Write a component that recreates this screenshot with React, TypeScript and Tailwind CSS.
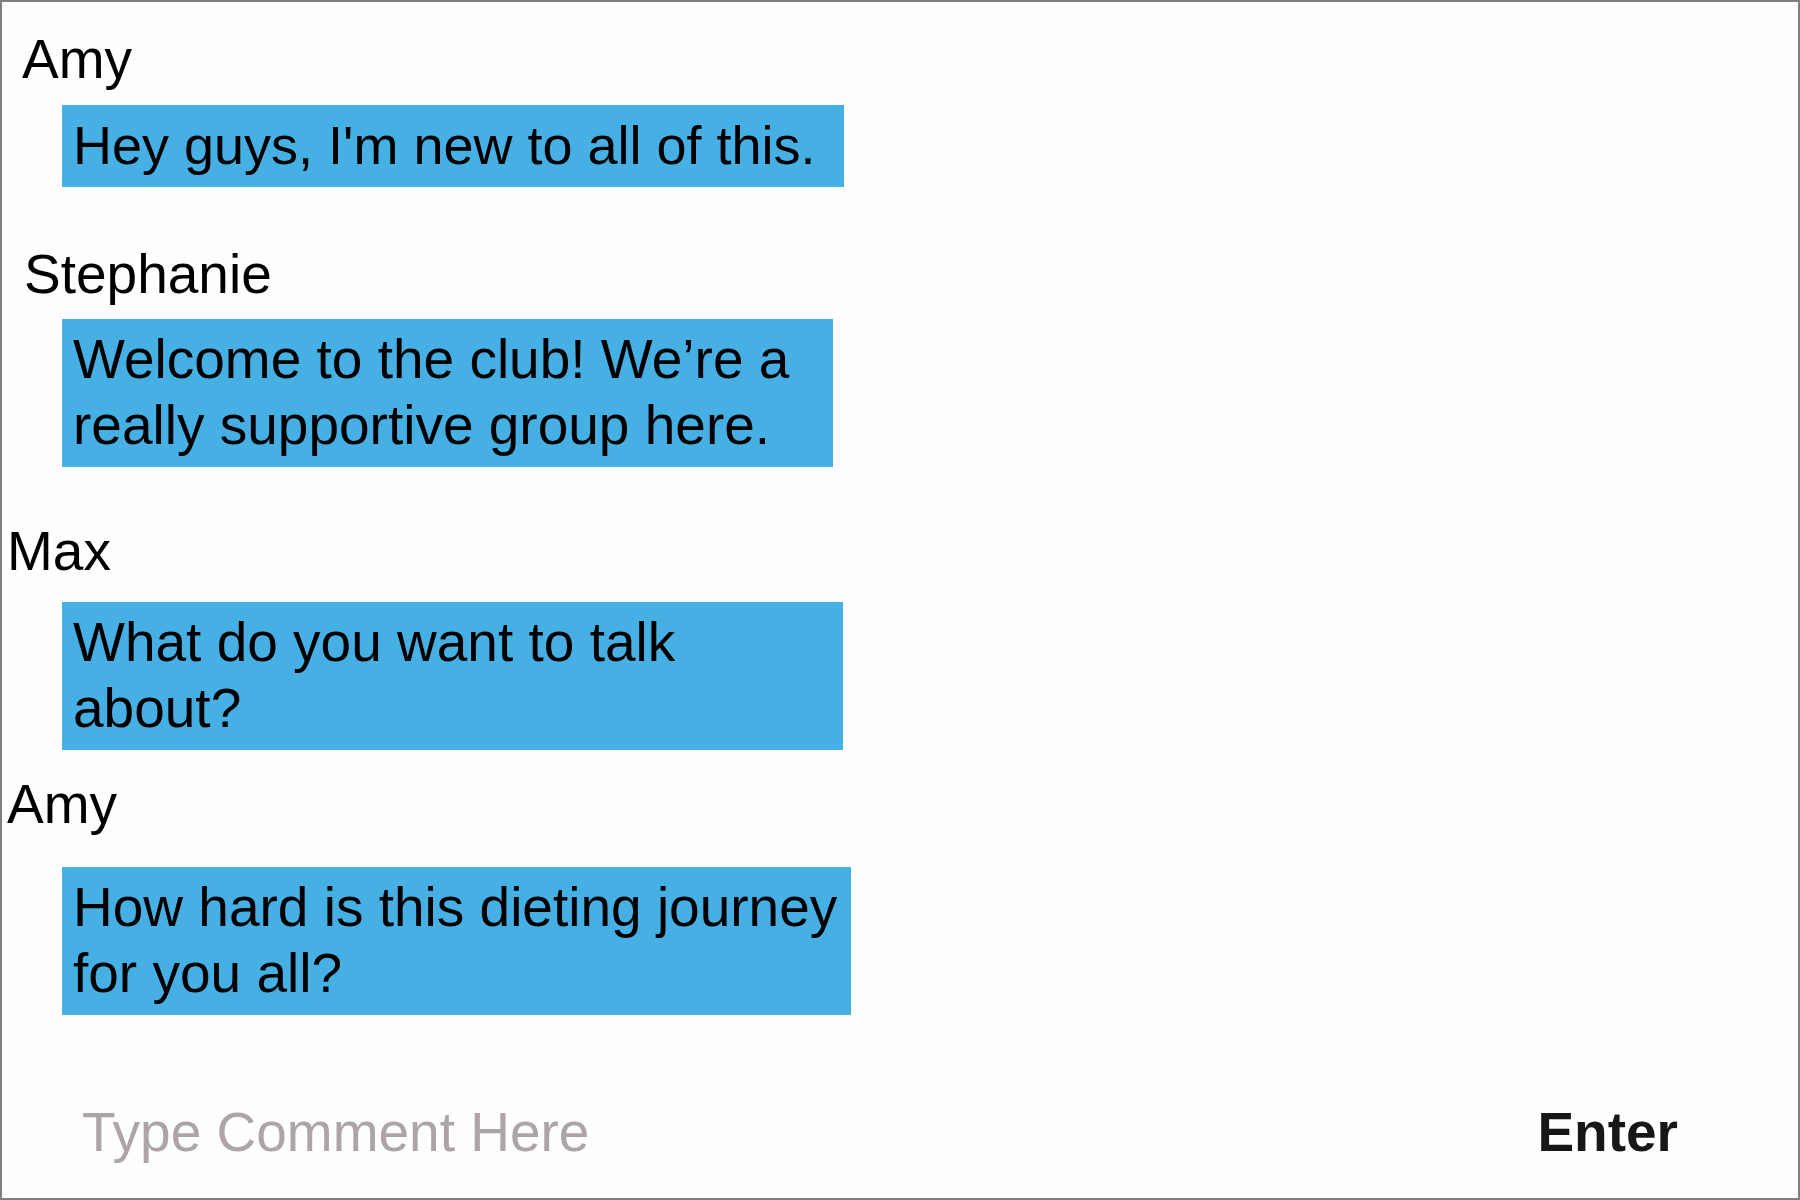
const messages = [
  {
    name: "Amy",
    nameClass: "mt-[24px] ml-[20px]",
    bubbleClass: "mt-[13px] w-[782px] text-[54px]",
    lines: ["Hey guys, I'm new to all of this."],
  },
  {
    name: "Stephanie",
    nameClass: "mt-[54px] ml-[22px]",
    bubbleClass: "mt-[12px] w-[771px]",
    lines: ["Welcome to the club! We’re a", "really supportive group here."],
  },
  {
    name: "Max",
    nameClass: "mt-[51px] ml-[5px]",
    bubbleClass: "mt-[18px] w-[781px]",
    lines: ["What do you want to talk", "about?"],
  },
  {
    name: "Amy",
    nameClass: "mt-[21px] ml-[5px]",
    bubbleClass: "mt-[30px] w-[789px]",
    lines: ["How hard is this dieting journey", "for you all?"],
  },
]

function Message({ item }: { item: (typeof messages)[number] }) {
  return (
    <>
      <div className={`${item.nameClass} text-black`}>{item.name}</div>
      <div
        className={`${item.bubbleClass} ml-[60px] bg-[#46b0e4] pl-[11px] pt-[7px] pb-[9px] text-black`}
      >
        {item.lines.map((line) => (
          <div key={line} className="whitespace-nowrap">
            {line}
          </div>
        ))}
      </div>
    </>
  )
}

export default function App() {
  return (
    <div
      className="flex h-[1200px] w-[1800px] flex-col border-2 border-[#808080] bg-[#fefefe] text-[55px] leading-[66px]"
      style={{ fontFamily: '"Liberation Sans", Arial, sans-serif' }}
    >
      {messages.map((item, i) => (
        <Message key={i} item={item} />
      ))}

      <div className="mt-[84px] flex items-center justify-between pl-[80px] pr-[120px]">
        <span className="text-[#ada5a5]">Type Comment Here</span>
        <span className="font-bold text-[#171717]">Enter</span>
      </div>
    </div>
  )
}
